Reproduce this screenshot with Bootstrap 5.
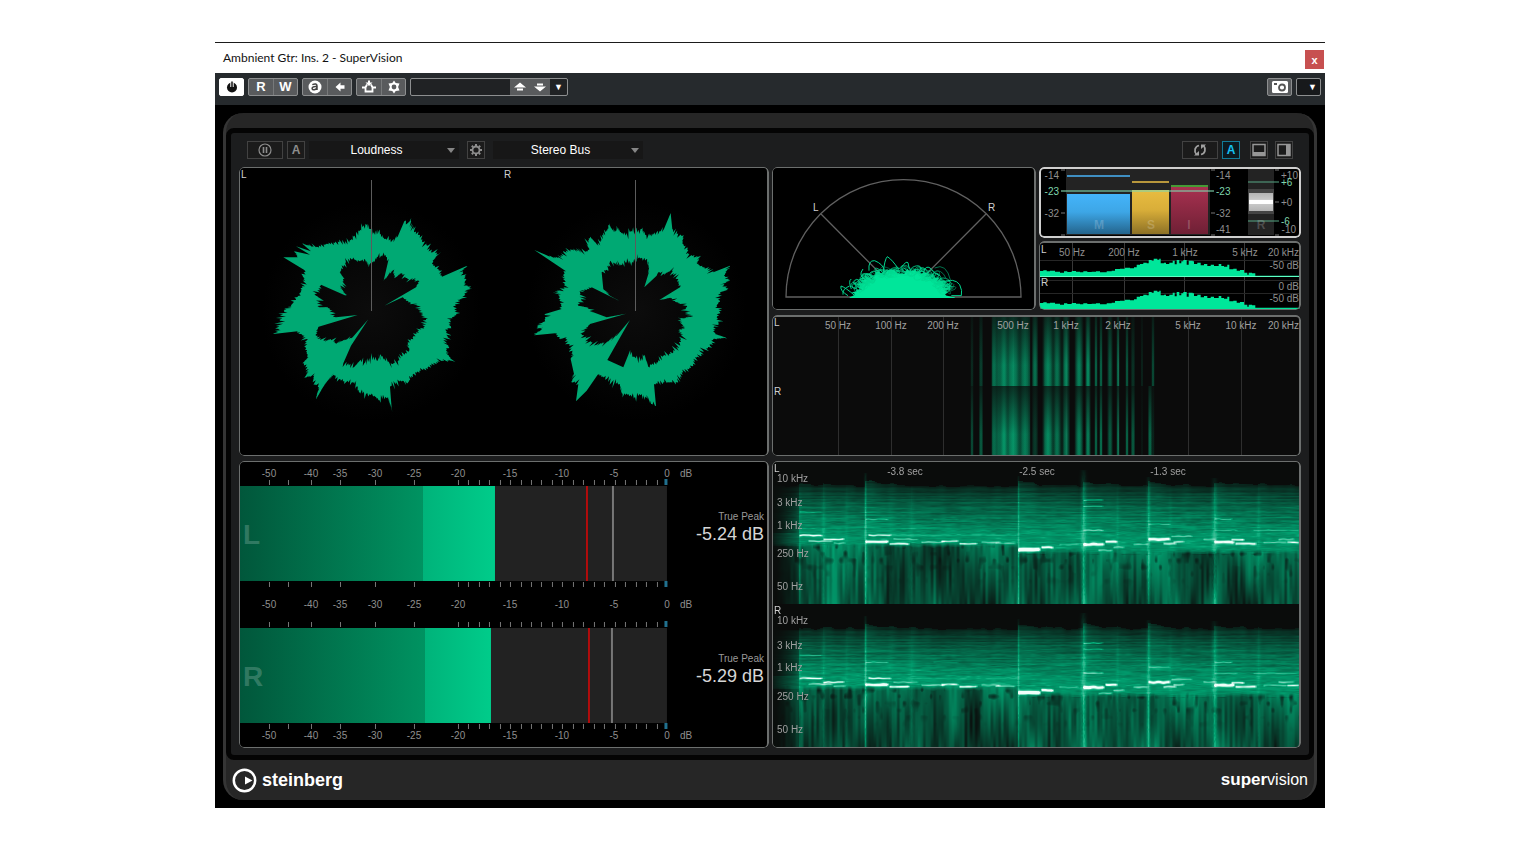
<!DOCTYPE html>
<html lang="en">
<head>
<meta charset="utf-8">
<meta name="viewport" content="width=device-width, initial-scale=1">
<title>SuperVision</title>
<link rel="stylesheet" href="https://cdn.jsdelivr.net/npm/bootstrap@5.3.0/dist/css/bootstrap.min.css">
<style>
:root { --rim:#6c6f6e; }
body { background:#fff; font:12px/16px "Liberation Sans", Arial, sans-serif; }
.plugin-window { max-width:1110px; margin-top:42px; border-top:1px solid #1b1b1b; }
.title-strip { height:30px; padding-left:8px; color:#111; font:12px/30px Lato, "Open Sans", sans-serif; }
.close-btn { width:19px; height:19px; margin:7px 1px 0 0; background:#c75050; color:#fff; border:0; padding:0; font:bold 11px/16px "Liberation Sans", sans-serif; }
.host-bar { height:32px; padding:5px 4px 0; background:#262a2d; gap:4px; }
.key-group { height:18px; border:1px solid #8d8f90; border-radius:2px; overflow:hidden; background:#595b5d; }
.key-group button { width:24px; border:0; padding:0; background:transparent; color:#fff; font-weight:bold; font-size:13px; line-height:16px; }
.key-group button + button { border-left:1px solid #77797a; }
.key-group svg, .mini svg { display:block; margin:auto; }
.key-group .narrow { width:23px; }
.key-group.dark { background:#17191b; }
.preset { width:158px; background:#202224; }
.preset input { width:99px; min-width:0; border:0; background:transparent; color:#ddd; padding:0 4px; }
.preset .step { width:20px; background:#595b5d; border:0 !important; }
.preset .drop { width:17px; border:0 !important; font-size:9px; }
.key-group .lone { width:23px; font-size:9px; padding-left:8px; }
.stage { background:#000; padding:8px; }
.chassis { background:#262626; border:solid #353535; border-width:0 3px; border-radius:20px; padding-top:15px; }
.screen { border:5px solid #040404; border-radius:8px; background:#1c1d1e; padding:0 8px 7px; }
.tool-row { height:34px; padding:8px; }
.mini { height:18px; width:18px; padding:0; background:#1b1b1b; border:1px solid #424242; color:#8d8d8d; font-weight:bold; font-size:12px; line-height:16px; }
.mini.wide { width:36px; }
.mini.gear { margin:0 8px; }
.mini.dock { margin:0 7px 0 10px; }
.mini.on { color:#16c0f0; border-color:#127b98; background:#0c1a20; }
.picker { position:relative; width:150px; background:#171717; }
.picker.first { margin-left:4px; }
.picker select { appearance:none; width:100%; height:18px; border:0; padding:0 15px 0 0; background:transparent; color:#fff; text-align:center; text-align-last:center; font-size:12px; line-height:16px; }
.picker::after { content:""; position:absolute; right:4px; top:7px; border:4px solid transparent; border-top:5px solid #858585; border-bottom:0; pointer-events:none; }
.meters { display:grid; grid-template-columns:530fr 529fr; gap:5px 3px; }
.upper-right { display:grid; gap:5px; }
.scopes { display:grid; grid-template-columns:264fr 262fr; gap:3px; }
.stacked { display:grid; gap:3px; }
.pane { position:relative; background:#000; padding:1px; border-radius:5px; overflow:hidden; }
.pane.faint { background:#0b0b0b; }
.pane::after { content:""; position:absolute; inset:0; border:1px solid var(--rim); border-right-width:2px; border-radius:5px; pointer-events:none; }
.pane.topped::after { border-top-width:2px; }
.pane.active { padding:2px; }
.pane.active::after { border:2px solid #cfcfcf; }
.pane > svg { display:block; width:100%; height:auto; position:relative; }
.pane > canvas { position:absolute; inset:1px; width:calc(100% - 2px); height:calc(100% - 2px); }
.glow { background:radial-gradient(circle at 25% 50%, #0c0c0c, transparent 26%), radial-gradient(circle at 75% 50%, #0c0c0c, transparent 26%), #000; }
.level svg { display:block; width:86.4%; height:auto; }
.readout { flex:1; text-align:right; padding-right:4px; white-space:nowrap; color:#999; font-size:10px; line-height:14px; }
.readout output { display:block; color:#d6d6d6; font-size:18px; line-height:20px; }
.readout.first { padding-top:48px; }
.readout.second { padding-top:41px; }
svg text { font-family:"Liberation Sans", Arial, sans-serif; font-size:10px; fill:#8f8f8f; }
svg .ch { fill:#d0d0d0; }
svg .mint { fill:#7fd6ad; }
svg .pale text { fill:#a0a0a0; }
svg .mid { text-anchor:middle; }
svg .end { text-anchor:end; }
svg .ghost { font-size:28px; font-weight:bold; fill:#fff; fill-opacity:.2; }
svg .seal { font-size:12px; font-weight:bold; fill:#fff; fill-opacity:.2; text-anchor:middle; }
.brand-row { height:40px; padding:0 6px; color:#fff; }
.brand { font-weight:bold; font-size:18px; line-height:20px; gap:5px; }
.product { font-size:17px; line-height:20px; }
.product span { font-size:16px; }
</style>
</head>
<body>
<main class="plugin-window mx-auto">
  <header class="title-strip d-flex justify-content-between">
    <span>Ambnient Gtr: Ins. 2 - SuperVision</span>
    <button class="close-btn" type="button" aria-label="Close">x</button>
  </header>

  <div class="host-bar d-flex" role="toolbar" aria-label="Plug-in controls">
    <div class="key-group d-flex bg-white border-white"><button class="narrow" type="button" aria-label="Bypass"><svg width="14" height="14" viewBox="0 0 14 14"><circle cx="7" cy="7.500" r="5" fill="#111"/><path d="M7 1v6" stroke="#fff" stroke-width="3.400"/><path d="M7 1.500v5.500" stroke="#111" stroke-width="1.500"/></svg></button></div>
    <div class="key-group d-flex"><button type="button">R</button><button type="button">W</button></div>
    <div class="key-group d-flex">
      <button type="button" aria-label="Compare"><svg width="16" height="16" viewBox="0 0 16 16"><circle cx="8" cy="8" r="6.500" fill="#fff"/><path d="M5.300 5.600q4.700-1.800 4.700 1.400v4M10 7.600c-6-.6-6 3.600-2.600 3.100q2.600-.6 2.600-2.500" fill="none" stroke="#444" stroke-width="1.500"/></svg></button>
      <button type="button" aria-label="Copy settings"><svg width="16" height="16" viewBox="0 0 16 16"><path d="M3.500 8l5-4.500v2.800h4v3.400h-4v2.800z" fill="#fff"/></svg></button>
    </div>
    <div class="key-group d-flex">
      <button type="button" aria-label="Side-chain"><svg width="16" height="16" viewBox="0 0 16 16" fill="none" stroke="#fff" stroke-width="1.800"><path d="M1 8.500h3.500v4h7v-4H15M4.500 8.500L6 5.500M11.500 8.500L10 5.500"/><path d="M4.500 3.500h7L8 7zM7 1.500h2v3H7z" fill="#fff" stroke="none"/></svg></button>
      <button type="button" aria-label="Setup"><svg width="16" height="16" viewBox="0 0 16 16"><path d="M8 1.500l1.700 2.600 3.800.4L12.100 8l1.400 3.500-3.800.4L8 14.500l-1.700-2.600-3.800-.4L3.900 8 2.500 4.500l3.800-.4z" fill="#fff"/><circle cx="8" cy="8" r="2.400" fill="#595b5d"/></svg></button>
    </div>
    <div class="key-group preset d-flex">
      <input type="text" aria-label="Preset name">
      <button class="step" type="button" aria-label="Previous preset"><svg width="14" height="14" viewBox="0 0 14 14" fill="#fff"><path d="M1 7.500l6-5 6 5zM4 8.500h6v2H4z"/></svg></button>
      <button class="step" type="button" aria-label="Next preset"><svg width="14" height="14" viewBox="0 0 14 14" fill="#fff"><path d="M1 6.500l6 5 6-5zM4 3.500h6v2H4z"/></svg></button>
      <button class="drop" type="button" aria-label="Preset menu">▼</button>
    </div>
    <div class="key-group d-flex ms-auto"><button class="narrow" type="button" aria-label="Snapshot"><svg width="18" height="14" viewBox="0 0 18 14"><rect x="1" y="1" width="16" height="12" rx="1.500" fill="#fff"/><circle cx="11" cy="7.500" r="3" fill="none" stroke="#555" stroke-width="1.800"/><path d="M3 4h3" stroke="#555" stroke-width="1.800"/></svg></button></div>
    <div class="key-group dark d-flex"><button class="lone" type="button" aria-label="Functions menu">▼</button></div>
  </div>

  <section class="stage">
    <div class="chassis">
      <div class="screen">
        <div class="tool-row d-flex align-items-center">
          <button class="mini wide" type="button" aria-label="Pause"><svg width="14" height="14" viewBox="0 0 14 14" fill="none" stroke="#8d8d8d"><circle cx="7" cy="7" r="6" stroke-width="1.200"/><path d="M5.500 4v6M8.500 4v6" stroke-width="1.600"/></svg></button>
          <button class="mini ms-1" type="button">A</button>
          <div class="picker first"><select aria-label="Module"><option>Loudness</option></select></div>
          <button class="mini gear" type="button" aria-label="Module settings"><svg width="14" height="14" viewBox="0 0 14 14" fill="none" stroke="#8d8d8d"><circle cx="7" cy="7" r="3.500" stroke-width="1.800"/><path stroke-width="2" d="M7 1v2M7 11v2M1 7h2M11 7h2M2.800 2.800l1.400 1.400M9.800 9.800l1.400 1.400M11.200 2.800L9.800 4.200M4.200 9.800l-1.400 1.400"/></svg></button>
          <div class="picker"><select aria-label="Channel source"><option>Stereo Bus</option></select></div>
          <button class="mini wide ms-auto" type="button" aria-label="Reset"><svg width="16" height="14" viewBox="0 0 16 14" fill="none" stroke="#a0a0a0" stroke-width="1.800"><path d="M4.500 11.500C1.500 8 3 3.500 7 2.500M11.500 2.500c3 3.500 1.500 8-2.500 9"/><path d="M2 12.500h5V8zM14 1.500H9V6z" fill="#a0a0a0" stroke="none"/></svg></button>
          <button class="mini on ms-1" type="button" aria-pressed="true">A</button>
          <button class="mini dock" type="button" aria-label="Bottom panel"><svg width="16" height="16" viewBox="0 0 16 16"><path d="M2 2.500h12v11H2z" fill="none" stroke="#969696" stroke-width="1.500"/><path d="M2 10h12v4H2z" fill="#969696"/></svg></button>
          <button class="mini" type="button" aria-label="Side panel"><svg width="16" height="16" viewBox="0 0 16 16"><path d="M2 2.500h12v11H2z" fill="none" stroke="#969696" stroke-width="1.500"/><path d="M10 2h4v12h-4z" fill="#969696"/></svg></button>
        </div>

        <div class="meters">
          <div class="pane glow">
            <svg viewBox="0 0 528 287" role="img" aria-label="Wavescope">
              <g id="rings" fill="#00a973" fill-rule="evenodd"></g>
              <path d="M131.500 12v131M395.500 12v131" stroke="#5c5c5c"/>
              <text class="ch" x="1" y="10">L</text><text class="ch" x="264" y="10">R</text>
            </svg>
          </div>

          <div class="upper-right">
            <div class="scopes">
              <div class="pane">
                <svg viewBox="0 0 262 141" role="img" aria-label="Panorama">
                  <path d="M13 129a117.500 117.500 0 0 1 235 0zM48 46l82.500 83L213 46" fill="none" stroke="#606060" stroke-width="1.300"/>
                  <g id="cloud" transform="translate(-5 -4) scale(.3333)"></g>
                  <text class="ch" x="40" y="43">L</text><text class="ch" x="215" y="43">R</text>
                </svg>
              </div>
              <div class="stacked">
                <div class="pane active">
                  <svg viewBox="0 0 258 67" role="img" aria-label="Loudness">
                    <defs>
                      <linearGradient id="gm" x2="0" y2="1"><stop stop-color="#44b4fa"/><stop offset=".45" stop-color="#3da6e6"/><stop offset="1" stop-color="#24648c"/></linearGradient>
                      <linearGradient id="gs" x2="0" y2="1"><stop stop-color="#e8bc40"/><stop offset=".45" stop-color="#d9ae39"/><stop offset="1" stop-color="#8d7126"/></linearGradient>
                      <linearGradient id="gi" x2="0" y2="1"><stop stop-color="#a83150"/><stop offset="1" stop-color="#6f2035"/></linearGradient>
                      <linearGradient id="gr" x2="0" y2="1"><stop stop-color="#b4b4b4"/><stop offset=".36" stop-color="#c8c8c8"/><stop offset=".38" stop-color="#fff"/><stop offset=".6" stop-color="#fff"/><stop offset=".62" stop-color="#c8c8c8"/><stop offset="1" stop-color="#b4b4b4"/></linearGradient>
                    </defs>
                    <path fill="#232323" d="M25 0h144v66H25zM207 0h26v66h-26z"/>
                    <path fill="url(#gm)" d="M26 25h63v40H26z"/><path fill="url(#gs)" d="M91 21h37v44H91z"/><path fill="url(#gi)" d="M130 18h37v47h-37z"/>
                    <path d="M26 7h63" stroke="#3f8fc2" stroke-width="2"/><path d="M91 13h37" stroke="#b8973c" stroke-width="2"/><path d="M130 17h37" stroke="#459a35" stroke-width="2"/>
                    <path d="M20 22h153" stroke="#7fd6ad" stroke-opacity=".75" stroke-width="1.500"/>
                    <path d="M207 20h26v25h-26z" fill="#444"/><path d="M208 24h24v18h-24z" fill="url(#gr)"/>
                    <path d="M207 13h31M207 52h31" stroke="#58a886"/>
                    <path d="M20 44h4M170 44h4M234 33h4M20 66h4M20 1h4M170 66h4M170 1h4M234 66h4M234 1h4" stroke="#777"/>
                    <text class="end" x="18" y="10">-14</text><text class="end mint" x="18" y="26">-23</text><text class="end" x="18" y="48">-32</text>
                    <text x="175" y="10">-14</text><text class="mint" x="175" y="26">-23</text><text x="175" y="48">-32</text><text x="175" y="64">-41</text>
                    <text class="end" x="257" y="10">+10</text><text class="mint" x="240" y="17">+6</text><text x="240" y="37">+0</text><text class="mint" x="240" y="56">-6</text><text class="end" x="255" y="64">-10</text>
                    <text class="seal" x="58" y="60">M</text><text class="seal" x="110" y="60">S</text><text class="seal" x="148" y="60">I</text><text class="seal" x="220" y="60">R</text>
                  </svg>
                </div>
                <div class="pane topped">
                  <svg viewBox="0 0 260 67" role="img" aria-label="Spectrum bars">
                    <path d="M32.500 0v67M84.500 0v67M144.500 0v67M204.500 0v67" stroke="#383838"/>
                    <path d="M0 18.500h260M0 38.500h260M0 51.500h260" stroke="#262626"/>
                    <path id="barsL" fill="#00e69a"/><path id="barsR" fill="#00e69a"/>
                    <path d="M0 34.500h260" stroke="#5fffc4"/>
                    <text class="ch" x="1" y="11">L</text><text class="ch" x="1" y="44">R</text>
                    <text class="mid" x="32" y="14">50 Hz</text><text class="mid" x="84" y="14">200 Hz</text><text class="mid" x="145" y="14">1 kHz</text><text class="mid" x="205" y="14">5 kHz</text><text class="end" x="259" y="14">20 kHz</text>
                    <text class="end" x="259" y="27">-50 dB</text><text class="end" x="259" y="48">0 dB</text><text class="end" x="259" y="60">-50 dB</text>
                  </svg>
                </div>
              </div>
            </div>
            <div class="pane faint topped">
              <svg viewBox="0 0 527 139" role="img" aria-label="Spectrum intensity">
                <defs>
                  <linearGradient id="soft"><stop stop-color="#00a672" stop-opacity="0"/><stop offset=".3" stop-color="#05a874" stop-opacity=".75"/><stop offset=".5" stop-color="#05a874"/><stop offset=".7" stop-color="#05a874" stop-opacity=".75"/><stop offset="1" stop-color="#00a672" stop-opacity="0"/></linearGradient>
                  <linearGradient id="veil" x2="0" y2="1"><stop stop-color="#0b0b0b" stop-opacity=".75"/><stop offset=".7" stop-color="#0b0b0b" stop-opacity=".1"/><stop offset="1" stop-color="#0b0b0b" stop-opacity=".1"/></linearGradient>
                </defs>
                <path d="M65.500 0v139M118.500 0v139M170.500 0v139M240.500 0v139M293.500 0v139M345.500 0v139M415.500 0v139M468.500 0v139" stroke="#2e2e2e"/>
                <g id="bands"></g>
                <path d="M195 0h190v70H195z" fill="url(#veil)"/><path d="M195 70h190v69H195z" fill="url(#veil)"/>
                <text class="ch" x="1" y="10">L</text><text class="ch" x="1" y="79">R</text>
                <g class="pale"><text class="mid" x="65" y="13">50 Hz</text><text class="mid" x="118" y="13">100 Hz</text><text class="mid" x="170" y="13">200 Hz</text><text class="mid" x="240" y="13">500 Hz</text><text class="mid" x="293" y="13">1 kHz</text><text class="mid" x="345" y="13">2 kHz</text><text class="mid" x="415" y="13">5 kHz</text><text class="mid" x="468" y="13">10 kHz</text><text class="end" x="526" y="13">20 kHz</text></g>
              </svg>
            </div>
          </div>

          <div class="pane">
            <div class="level d-flex">
              <svg viewBox="0 0 456 149" role="img" aria-label="Left level">
                <defs>
                  <linearGradient id="low"><stop stop-color="#01573b"/><stop offset="1" stop-color="#009361"/></linearGradient>
                  <linearGradient id="high"><stop stop-color="#00b37a"/><stop offset="1" stop-color="#00cc8a"/></linearGradient>
                </defs>
                <path fill="#222" d="M0 24h427v95H0z"/><path fill="url(#low)" d="M0 24h183v95H0z"/><path fill="url(#high)" d="M183 24h72v95h-72z"/>
                <path d="M347 24v95" stroke="#b30c0c" stroke-width="2"/><path d="M373 24v95" stroke="#777" stroke-width="2"/>
                <g class="ticks" data-y="18"></g><g class="ticks" data-y="120"></g>
                <g class="scale-text" data-y="15"></g><g class="scale-text" data-y="146"></g>
                <text class="ghost" x="3" y="82">L</text>
              </svg>
              <div class="readout first"><label for="peakL">True Peak</label><output id="peakL">-5.24 dB</output></div>
            </div>
            <div class="level d-flex">
              <svg viewBox="0 0 456 136" role="img" aria-label="Right level">
                <path fill="#222" d="M0 17h427v95H0z"/><path fill="url(#low)" d="M0 17h185v95H0z"/><path fill="url(#high)" d="M185 17h66v95h-66z"/>
                <path d="M349 17v95" stroke="#b30c0c" stroke-width="2"/><path d="M372 17v95" stroke="#777" stroke-width="2"/>
                <g class="ticks" data-y="11"></g><g class="ticks" data-y="113"></g>
                <g class="scale-text" data-y="128"></g>
                <text class="ghost" x="3" y="75">R</text>
              </svg>
              <div class="readout second"><label for="peakR">True Peak</label><output id="peakR">-5.29 dB</output></div>
            </div>
          </div>

          <div class="pane faint">
            <canvas id="gram" width="527" height="285"></canvas>
            <svg viewBox="0 0 527 285" role="img" aria-label="Spectrogram">
              <text class="ch" x="1" y="10">L</text><text class="ch" x="1" y="152">R</text>
              <g class="pale"><text x="4" y="20">10 kHz</text><text x="4" y="44">3 kHz</text><text x="4" y="67">1 kHz</text><text x="4" y="95">250 Hz</text><text x="4" y="128">50 Hz</text>
              <text x="4" y="162">10 kHz</text><text x="4" y="187">3 kHz</text><text x="4" y="209">1 kHz</text><text x="4" y="238">250 Hz</text><text x="4" y="271">50 Hz</text>
              <text class="mid" x="132" y="13">-3.8 sec</text><text class="mid" x="264" y="13">-2.5 sec</text><text class="mid" x="395" y="13">-1.3 sec</text></g>
            </svg>
          </div>
        </div>
      </div>

      <footer class="brand-row d-flex align-items-center justify-content-between">
        <div class="brand d-flex align-items-center"><svg width="25" height="25" viewBox="0 0 25 25"><circle cx="12.500" cy="12.500" r="10.700" fill="none" stroke="#fff" stroke-width="2.500"/><path d="M13 8.500l7.500 4-7.500 4z" fill="#fff"/></svg>steinberg</div>
        <div class="product"><b>super</b><span>vision</span></div>
      </footer>
    </div>
  </section>
</main>
<script src="https://cdn.jsdelivr.net/npm/bootstrap@5.3.0/dist/js/bootstrap.bundle.min.js"></script>
<script>
const NS = 'http://www.w3.org/2000/svg';
function add(parent, tag, attrs, text) {
  const e = document.createElementNS(NS, tag);
  for (const k in attrs) e.setAttribute(k, attrs[k]);
  if (text !== undefined) e.textContent = text;
  parent.appendChild(e);
  return e;
}
let seed = 7;
function rnd() { seed = (seed * 1664525 + 1013904223) % 4294967296; return seed / 4294967296; }

/* Wavescope: two closed contours per channel, roughened along the way */
const rings = [
 { cx:407, dx:-4,
   out:'407,195 415,212 428,202 445,225 470,228 485,218 505,172 515,178 524,170 535,205 550,212 560,235 575,245 590,265 608,270 590,290 592,305 612,320 618,338 690,307 680,325 690,345 685,358 704,374 685,382 690,400 665,410 655,430 660,450 642,470 645,490 630,500 635,520 630,535 640,550 630,560 648,590 620,590 600,595 575,610 550,620 530,632 515,658 500,650 480,655 462,668 467,732 455,700 430,708 415,695 390,690 370,685 355,655 330,655 310,645 293,632 270,655 255,680 240,706 248,670 230,655 235,635 208,640 218,615 200,598 215,580 208,550 212,525 195,510 185,502 112,510 130,495 132,470 145,440 165,425 180,405 190,390 205,355 200,335 205,318 142,280 185,280 175,262 222,272 180,247 225,262 200,240 240,250 270,240 310,235 345,228 360,210 380,190 392,183 400,195',
   inn:'407,300 425,280 445,275 458,285 443,350 460,330 470,320 480,340 495,328 515,345 548,350 540,370 445,425 500,400 515,415 545,425 555,450 570,465 562,490 540,505 530,520 515,535 520,560 500,575 485,592 470,600 450,590 432,572 425,590 400,582 385,598 370,592 355,608 322,598 345,545 397,466 350,520 320,530 300,538 285,525 265,530 240,515 248,488 365,453 300,460 290,445 275,430 250,430 255,405 240,395 255,362 330,395 315,370 325,345 312,325 330,295 350,285 370,292 385,285 400,302' },
 { cx:406, dx:260,
   out:'406,200 425,195 435,212 450,215 470,205 492,195 512,147 517,195 530,210 548,215 548,240 562,250 565,270 585,280 602,275 590,300 610,310 640,325 690,305 672,335 690,348 670,360 680,378 660,385 660,410 650,425 660,445 650,460 655,480 640,490 645,510 678,521 640,525 630,545 610,560 605,575 585,580 580,605 545,625 535,655 510,655 490,655 462,660 468,725 455,720 440,702 425,690 405,698 385,690 370,695 358,660 335,655 320,645 293,632 260,680 228,712 235,660 215,655 222,630 212,585 218,560 205,540 200,520 180,525 165,508 103,514 125,495 110,490 135,470 135,450 185,435 180,400 165,383 190,380 195,350 190,335 198,322 103,258 150,278 185,280 190,265 215,257 250,265 268,258 262,240 270,218 295,245 310,215 328,185 345,205 350,195 370,212 390,205',
   inn:'406,295 415,282 440,285 448,320 433,370 470,335 475,325 490,330 515,320 530,345 540,370 478,408 510,402 530,415 560,425 555,445 572,457 540,465 545,480 555,492 535,500 545,515 540,540 520,565 490,575 470,595 445,608 433,572 425,582 400,578 386,570 370,610 322,588 390,468 350,515 320,535 290,542 265,530 245,510 270,480 378,449 320,460 280,445 260,430 235,425 245,410 240,385 275,370 360,412 330,395 310,375 305,325 325,315 330,292 360,305 380,295' }
];
function rough(src, cx, cy) {
  const p = src.split(' ').map(s => s.split(',').map(Number));
  let d = '';
  p.forEach((a, i) => {
    const b = p[(i + 1) % p.length], len = Math.hypot(b[0]-a[0], b[1]-a[1]);
    const n = len > 42 ? 1 : Math.max(1, Math.round(len / 3.4));
    for (let k = 0; k < n; k++) {
      const x = a[0] + (b[0]-a[0])*k/n, y = a[1] + (b[1]-a[1])*k/n, r = Math.hypot(x-cx, y-cy);
      const j = len > 42 || k === 0 ? 1 : 1 + (k % 2 ? 1 : -1) * rnd() * rnd() * 20 / r;
      d += (d ? 'L' : 'M') + (cx + (x-cx)*j).toFixed(1) + ' ' + (cy + (y-cy)*j).toFixed(1);
    }
  });
  return d + 'Z';
}
for (const r of rings)
  add(document.getElementById('rings'), 'path', { transform:`translate(${r.dx} -4) scale(.3333)`, d: rough(r.out, r.cx, 441) + rough(r.inn, r.cx, 441) });

/* Panorama cloud: solid core with loose loops round its edge */
const cloud = document.getElementById('cloud');
let core = 'M245 399';
for (let i = 0; i <= 60; i++) {
  const t = Math.PI * (1 - i/60), k = 0.84 + rnd()*0.2;
  core += `L${(402 + 150*Math.cos(t)*k).toFixed(1)} ${(399 - 82*Math.pow(Math.sin(t), .95)*k).toFixed(1)}`;
}
add(cloud, 'path', { d: core + 'L560 399L560 402L245 402Z', fill:'#00e69a' });
for (let i = 0; i < 120; i++) {
  const t = Math.PI * (.06 + .88*rnd()), k = .78 + .2*rnd();
  const x = 400 + 160*Math.cos(t)*k, y = 397 - 86*Math.sin(t)*k, rx = 4 + 15*rnd(), ry = 3 + 8*rnd();
  add(cloud, 'ellipse', { cx:x.toFixed(1), cy:Math.min(y, 390).toFixed(1), rx:rx.toFixed(1), ry:ry.toFixed(1), transform:`rotate(${Math.round(rnd()*120-60)} ${x.toFixed(1)} ${y.toFixed(1)})`, fill:'none', stroke:'#00d890', 'stroke-width':2.4, opacity:(.4+.6*rnd()).toFixed(2) });
}
add(cloud, 'path', { d:'M345 330Q350 285 358 278Q372 286 392 316M303 320Q300 288 320 290Q345 300 350 320M240 395Q215 380 219 366Q232 370 262 396M225 392Q222 375 245 366M520 355Q560 340 575 362Q584 380 580 395H550M400 310Q415 290 420 296L424 315M250 345Q240 350 250 375M285 315Q270 335 290 345M465 325Q475 300 490 315Q500 330 515 335', fill:'none', stroke:'#00d890', 'stroke-width':3 });
add(cloud, 'path', { d:'M500 312Q535 295 548 350M495 325Q520 310 535 345', fill:'none', stroke:'#00714c', 'stroke-width':3 });

/* Spectrum bars */
const levels = [[0,705],[10,703],[20,706],[30,704],[45,707],[60,710],[72,706],[82,708],[95,705],[108,707],[120,709],[130,706],[142,708],[155,707],[168,706],[180,709],[200,706],[215,704],[225,699],[240,698],[255,695],[270,697],[282,694],[290,686],[300,684],[310,680],[320,682],[326,672],[335,674],[341,668],[352,671],[358,668],[362,682],[372,680],[378,684],[388,680],[398,674],[404,685],[410,672],[418,682],[424,676],[430,672],[440,686],[446,674],[458,676],[462,684],[472,680],[482,688],[492,684],[502,690],[512,686],[522,690],[536,684],[544,690],[552,692],[562,686],[568,700],[580,698],[590,704],[600,702],[612,710],[622,716],[626,710],[636,712],[646,719],[780,719]];
function bars(id, dy, base) {
  let d = `M0 ${base}`;
  levels.forEach(([x, y], i) => { if (i < levels.length-1) d += `V${(y/3-206+dy).toFixed(1)}H${(levels[i+1][0]/3).toFixed(1)}`; });
  document.getElementById(id).setAttribute('d', d + `V${base}Z`);
}
bars('barsL', 0, 35); bars('barsR', 32, 67);

/* Intensity bands: centre, width, strength left, strength right */
const bands = [[199,3,.25,.5],[208,4,.4,.6],[221,5,.65,.6],[226,8,.5,.55],[231,7,.9,1],[240,13,.85,.95],[252,10,.75,.75],[262,6,.75,.35],[275,10,.85,.9],[284,7,.7,.7],[293,6,.85,.7],[306,8,.85,.85],[315,5,.95,.85],[323,3,.7,.7],[328,3,.7,.8],[337,5,.6,.6],[345,3,.75,.75],[354,3,.6,.7],[360,4,.3,.6],[369,2,.2,.1],[380,3,.5,.2],[377,4,0,.7]];
const bg = document.getElementById('bands');
for (const [y, h, k] of [[0,70,2],[70,69,3]]) {
  add(bg, 'rect', { x:219, y, width:38, height:h, fill:'#03855c', opacity:.35 });
  add(bg, 'rect', { x:271, y, width:26, height:h, fill:'#03855c', opacity:.2 });
  for (const b of bands) add(bg, 'rect', { x:b[0]-b[1]*.6, y, width:b[1]*1.2, height:h, fill:'url(#soft)', opacity:b[k] });
}

/* Level meter scales */
const marks = [[29,'-50'],[71,'-40'],[100,'-35'],[135,'-30'],[174,'-25'],[218,'-20'],[270,'-15'],[322,'-10'],[374,'-5'],[427,'0']];
document.querySelectorAll('.ticks').forEach(g => {
  const y = +g.dataset.y;
  const xs = [29,48,71,100,135,174];
  for (let i = 20; i > 0; i--) xs.push(Math.round(427 - i*10.46));
  add(g, 'path', { d: xs.map(x => `M${x+.5} ${y}v5`).join(''), stroke:'#777' });
  add(g, 'path', { d:`M426 ${y-1}v6`, stroke:'#21718f', 'stroke-width':3 });
});
document.querySelectorAll('.scale-text').forEach(g => {
  for (const [x, s] of marks) add(g, 'text', { x, y:g.dataset.y, class:'mid' }, s);
  add(g, 'text', { x:440, y:g.dataset.y }, 'dB');
});

/* Spectrogram */
(function () {
  const W = 527, H = 285, c = document.getElementById('gram').getContext('2d'), img = c.createImageData(W, H);
  const hash = (x, y) => { const s = Math.sin(x*127.1 + y*311.7) * 43758.5453; return s - Math.floor(s); };
  const noise = (x, y) => {
    const xi = Math.floor(x), yi = Math.floor(y); let u = x-xi, v = y-yi; u = u*u*(3-2*u); v = v*v*(3-2*v);
    return (hash(xi,yi)*(1-u) + hash(xi+1,yi)*u)*(1-v) + (hash(xi,yi+1)*(1-u) + hash(xi+1,yi+1)*u)*v;
  };
  const clamp = t => Math.max(0, Math.min(1, t));
  /* onset x, width, top, strength */
  const hits = [[26,2,24,.1],[50,2,22,.14],[73,2,24,.08],[92,1.200,10,.4],[117,3,24,.06],[138,3,24,.1],[245,1,13,.32],[310,2.600,7,.38],[344,1.500,26,.1],[375,1.800,14,.34],[397,2,24,.08],[441,2.600,15,.32],[485,2,24,.12]];
  /* x from, x to, y, half height, strength */
  const notes = [[26,50,73,.9,.8],[50,72,77,.9,.8],[35,60,79,.9,.4],[60,73,81,.9,.4],[92,116,79.500,1.400,1.100],[116,137,81.500,1.100,.9],[95,119,73,.9,.6],[120,146,77,.8,.3],[148,172,80,.9,.4],[168,186,79,1,.6],[186,205,81.500,1,.8],[208,228,80,1,.35],[222,243,81,.9,.4],[245,268,87.500,1.800,1.400],[268,281,85,1.200,1.100],[286,306,82,1,.2],[310,332,82,1.500,1.200],[332,345,79.500,1.200,1],[325,340,88,1,.4],[340,352,85,1,.4],[360,376,82,1,.3],[375,398,77,1.400,1.100],[390,404,81.500,1.100,.6],[400,412,79.500,1,.5],[398,420,74,.9,.35],[430,444,77,1,.3],[441,462,80,1.500,1.100],[458,472,77.500,1,.8],[462,484,81.500,1.200,.8],[490,515,80,1,.25],[505,522,77,1,.35],[514,527,80,1,.7],
    [92,116,57,.7,.35],[26,50,50,.7,.25],[310,331,38,.7,.4],[310,331,44,.7,.3],[310,331,68,.8,.35],[375,398,62,.7,.3],[441,460,57,.7,.4],[441,465,68,.8,.25],[160,186,57,.7,.15],[480,527,68,.7,.2],[25,245,66,.8,.08],[92,245,73,.9,.1]];
  for (let ch = 0; ch < 2; ch++) for (let y = 0; y < 142; y++) for (let x = 0; x < W; x++) {
    const o = ch*91;
    const edge = (x < 245 ? 82 : 89) + noise(x/5+o, 8)*2;
    let v = 0, near = 0, lift = 0;
    for (const h of hits) {
      const dx = x - h[0];
      if (dx >= 0 && dx < 60) near = Math.max(near, Math.exp(-dx/22) * h[3]);
      if (y > h[2] && Math.abs(dx) < h[1]*3)
        lift += h[3]*Math.exp(-dx*dx/(h[1]*h[1])) * (.7 + .3*noise(x+o, y/2)) * clamp((y-h[2])/25 + .25) * (y > edge ? .85 : .6);
    }
    if (y < 92) {
      const top = 22 - near*14 + noise(x/7+o, 3)*3;
      const rise = clamp((y-top)/42);
      const stripe = .5 + .5*Math.sin(y*1.7 + Math.sin(y*.35)*2 + noise(x/60, 4));
      const grain = noise(x/16+o, y*.8+5), fine = noise(x/5+o, y*1.1+77);
      let u = rise > 0 ? (.06 + .5*Math.pow(rise,.75)) * (.62 + .3*stripe*(1.2-rise) + .3*grain + .18*fine) + near*.12 : 0;
      const mix = clamp((y-66)/6);
      u = u*(1-mix) + mix*(.46 + .12*grain + .1*fine);
      v = u;
    }
    if (y > edge-3) {
      const depth = clamp((y-edge)/(142-edge)), k = clamp((y-edge+3)/5);
      const col = noise(x/2.6+o, y/38+20), wide = noise(x/20+o, y/80+9), blot = noise(x/4.500+o, y/7+50);
      let u = .03 + .27*col + .42*(wide-.25);
      u = u*(.85+.15*depth) + (1-depth)*(1-depth)*.13;
      u *= 1 - clamp((.38-blot)*2.4)*clamp(1.3-depth*1.800)*.8;
      u += near*.32;
      u = Math.max(.03, u);
      v = v*(1-k) + u*k;
    }
    v += lift;
    for (const n of notes) {
      const f = clamp((x-n[0]+1)/2) * clamp((n[1]-x)/3);
      if (!f) continue;
      const dy = Math.abs(y + .2 - n[2] - (noise(x/5+o, n[2])-.5)*.8);
      if (dy < 5) v += n[4]*f*Math.exp(-dy*dy/(n[3]*n[3]))*(.7+.4*noise(x/5+o, n[2]*3));
    }
    if (x < 26) v *= y > 70 && y < 84 ? .12 + .6*x/26 : .04 + .6*Math.pow(x/26,1.500);
    const a = clamp(v/.66), w = clamp((v-.62)/.7), i = ((y + ch*143)*W + x)*4;
    if (y + ch*143 >= H) continue;
    img.data[i]   = 10*(1-a) + 240*w;
    img.data[i+1] = 12 + 156*a + 87*w;
    img.data[i+2] = 11 + 106*a + 133*w;
    img.data[i+3] = 255;
  }
  c.putImageData(img, 0, 0);
})();
</script>
</body>
</html>
